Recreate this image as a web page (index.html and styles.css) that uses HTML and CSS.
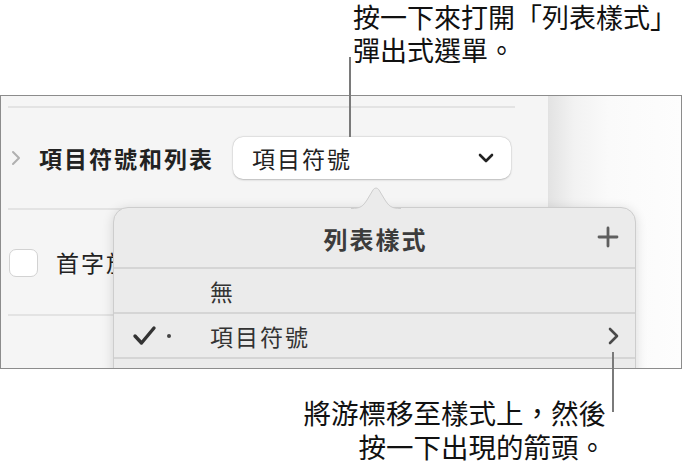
FILE: index.html
```html
<!DOCTYPE html>
<html lang="zh-Hant">
<head>
<meta charset="utf-8">
<link rel="stylesheet" href="styles.css">
</head>
<body>
<div class="page">
  <div class="callout callout-top">按一下來打開「列表樣式」<br>彈出式選單。</div>
  <div class="frame">
    <div class="sidebar">
      <div class="sep"></div>
      <div class="row row-bullets">
        <svg class="disclosure" width="12" height="18" viewBox="0 0 12 18"><path d="M3 3 L9 9 L3 15" fill="none" stroke="#b0b0b0" stroke-width="2" stroke-linecap="round" stroke-linejoin="round"/></svg>
        <span class="row-label">項目符號和列表</span>
        <div class="popup">
          <span class="popup-text">項目符號</span>
          <svg class="popup-chevron" width="18" height="12" viewBox="0 0 18 12"><path d="M3 3 L9 9 L15 3" fill="none" stroke="#222" stroke-width="2.6" stroke-linecap="round" stroke-linejoin="round"/></svg>
        </div>
      </div>
      <div class="sep"></div>
      <div class="row row-check">
        <span class="checkbox"></span>
        <span class="check-label">首字放大</span>
      </div>
      <div class="sep"></div>
    </div>
    <div class="canvas"></div>
    <div class="popover">
      <svg class="popover-arrow" width="50" height="27" viewBox="0 0 50 27"><path d="M0 26.5 C10 26.5 12 24 16 18 L22 8 C23.5 5.5 26.5 5.5 28 8 L34 18 C38 24 40 26.5 50 26.5" fill="#ebebeb" stroke="#cdcdcd" stroke-width="1"/></svg>
      <div class="pop-header">
        <span class="pop-title">列表樣式</span>
        <svg class="pop-plus" width="22" height="22" viewBox="0 0 22 22"><path d="M11 2 V20 M2 11 H20" stroke="#5f5f5f" stroke-width="2.8" stroke-linecap="round"/></svg>
      </div>
      <div class="pop-row">
        <span class="pop-mark"></span>
        <span class="pop-text">無</span>
      </div>
      <div class="pop-row">
        <span class="pop-mark">
          <svg width="26" height="22" viewBox="0 0 26 22"><path d="M3 11 L9.5 18 L22 3" fill="none" stroke="#333" stroke-width="3.4" stroke-linecap="round" stroke-linejoin="round"/></svg>
          <span class="dot"></span>
        </span>
        <span class="pop-text">項目符號</span>
        <svg class="pop-chevron" width="14" height="20" viewBox="0 0 14 20"><path d="M3 3 L10 10 L3 17" fill="none" stroke="#4a4a4a" stroke-width="2.6" stroke-linecap="round" stroke-linejoin="round"/></svg>
      </div>
      <div class="pop-row"></div>
    </div>
  </div>
  <div class="callout callout-bottom">將游標移至樣式上，然後<br>按一下出現的箭頭。</div>
  <span class="leader leader-top"></span>
  <span class="leader leader-bottom"></span>
</div>
</body>
</html>
```
FILE: styles.css
```css
* { box-sizing: border-box; }
html, body { margin: 0; padding: 0; background: #fff; }
body {
  font-family: "Noto Sans CJK TC", "Noto Sans", sans-serif;
  color: #1d1d1d;
}
.page {
  position: relative;
  width: 689px;
  height: 466px;
  overflow: hidden;
}
.callout {
  font-size: 27px;
  line-height: 33px;
  color: #111;
}
.callout-top {
  height: 95px;
  padding: 0 0 0 353px;
}
.callout-bottom {
  margin-top: 26px;
  font-size: 27.5px;
  text-align: right;
  padding-right: 83px;
  line-height: 34px;
}
.frame {
  position: relative;
  width: 682px;
  height: 274px;
  border: 1px solid #8c8c8c;
  display: flex;
  overflow: hidden;
  background: #fff;
}
.sidebar {
  width: 548px;
  flex: none;
  background: #f5f5f5;
  padding: 10px 0 0 7px;
  border-right: 1px solid #e2e2e2;
}
.sep {
  width: 507px;
  height: 2px;
  background: #e3e3e3;
}
.row {
  display: flex;
  align-items: center;
}
.row-bullets {
  height: 100px;
}
.disclosure {
  margin-left: 2px;
  flex: none;
}
.row-label {
  margin-left: 17px;
  font-size: 23px;
  font-weight: 700;
  letter-spacing: 2px;
  color: #222;
}
.popup {
  margin-left: 19px;
  width: 278px;
  height: 42px;
  background: #fff;
  border-radius: 10px;
  box-shadow: 0 0.5px 2px rgba(0,0,0,0.22), 0 0 0 0.5px rgba(0,0,0,0.06);
  display: flex;
  align-items: center;
  justify-content: space-between;
  padding: 0 16px 0 19px;
}
.popup-text {
  font-size: 23px;
  letter-spacing: 2px;
  color: #222;
}
.row-check {
  height: 104px;
}
.checkbox {
  width: 29px;
  height: 28px;
  border-radius: 7px;
  background: #fff;
  border: 1px solid #d2d2d2;
  margin-left: 1px;
  margin-top: 2px;
}
.check-label {
  margin-left: 18px;
  font-size: 23px;
  letter-spacing: 2px;
  color: #222;
}
.canvas {
  flex: 1;
  background: linear-gradient(to right, #e3e3e3 0px, #f2f2f2 25px, #fafafa 60px, #fdfdfd 100%);
}
.popover {
  position: absolute;
  left: 112px;
  top: 111px;
  width: 523px;
  height: 220px;
  background: #ebebeb;
  border: 1px solid #cdcdcd;
  border-radius: 15px;
  box-shadow: 0 2px 12px rgba(0,0,0,0.14);
}
.popover-arrow {
  position: absolute;
  left: 237px;
  top: -26px;
}
.pop-header {
  position: relative;
  height: 61px;
  display: flex;
  align-items: center;
  justify-content: center;
  border-bottom: 2px solid #d5d5d5;
}
.pop-title {
  font-size: 24px;
  font-weight: 700;
  letter-spacing: 2px;
  color: #3c3c3c;
  margin-top: 1px;
  margin-left: 2px;
}
.pop-plus {
  position: absolute;
  right: 16px;
  top: 18px;
}
.pop-row {
  height: 45px;
  display: flex;
  align-items: center;
  border-bottom: 2px solid #d5d5d5;
  padding-left: 18px;
}
.pop-mark {
  width: 78px;
  flex: none;
  display: flex;
  align-items: center;
}
.dot {
  width: 4px;
  height: 4px;
  border-radius: 50%;
  background: #444;
  margin-left: 9px;
}
.pop-text {
  font-size: 23px;
  letter-spacing: 2px;
  color: #333;
}
.pop-chevron {
  margin-left: auto;
  margin-right: 14px;
}
.leader {
  position: absolute;
  width: 2px;
  background: #7a7a7a;
}
.leader-top {
  left: 349px;
  top: 57px;
  height: 80px;
}
.leader-bottom {
  left: 612px;
  top: 352px;
  height: 60px;
}
```
